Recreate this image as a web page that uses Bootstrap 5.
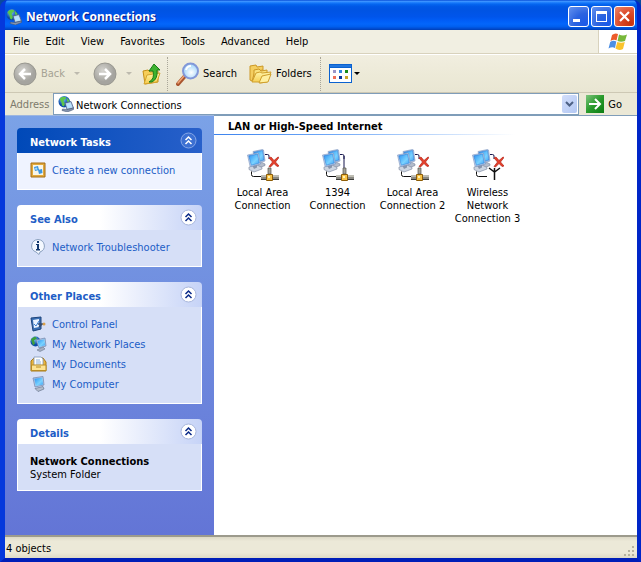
<!DOCTYPE html>
<html lang="en">
<head>
<meta charset="utf-8">
<meta name="viewport" content="width=device-width, initial-scale=1">
<title>Network Connections</title>
<link href="https://cdn.jsdelivr.net/npm/bootstrap@5.3.0/dist/css/bootstrap.min.css" rel="stylesheet">
<style>
:root { --link: #215dc6; }
body { font: 11px/13px "DejaVu Sans Condensed", Tahoma, "Noto Sans", sans-serif; color: #000; background: #0a4a9c; }
button { font: inherit; color: inherit; background: none; border: 0; padding: 0; }
svg { display: block; flex: none; }
.frame { border: solid; border-width: 0 4px 4px 5px; border-color: #0831d9 #0026c8 #001eb8 #0538dc; border-radius: 8px 8px 0 0; background: #0054e3; overflow: hidden; }
.caption-bar { height: 30px; margin: 0 -4px 0 -5px; padding: 3px 6px 0 6px; color: #fff;
  background: linear-gradient(#0a4fd8 0, #3a92ff 5%, #1a7cfb 9%, #0566f0 14%, #0058e6 22%, #0054e3 34%, #0055eb 56%, #005df6 68%, #0366fb 80%, #0060f0 88%, #0050d8 94%, #003eb4 100%); }
.caption-bar h1 { font: bold 12px/18px "Noto Sans", "Open Sans", sans-serif; margin: 0; text-shadow: 1px 1px #0a1883; }
.cap-btn { width: 21px; height: 21px; border: 1px solid #fff; border-radius: 3px; background: radial-gradient(circle at 85% 90%, #1b5ae8, #2b63e0 45%, #6f9bf2 110%); }
.cap-close { background: radial-gradient(circle at 80% 85%, #c8330c, #dd4c2b 50%, #f09a84 115%); }
.menu-row { height: 24px; background: #f1efe2; border-bottom: 1px solid #d8d2bd; }
.menu-row button { padding: 0 8px; }
.flag { width: 39px; background: #fff; border-left: 1px solid #d8d2bd; }
.tool-row { height: 39px; padding: 0 8px; background: linear-gradient(#f1eee0, #edead8 50%, #e9e6d3); border-top: 1px solid #fff; border-bottom: 1px solid #cdc8b4; }
.dim { color: #a5a294; }
.vline { height: 34px; border-left: 1px dotted #a9a699; }
.addr-row { height: 22px; background: #ebe8d6; }
.addr-row label { width: 48px; padding-left: 5px; color: #7d7a6c; }
.addr-box { border: 1px solid #7f9db9; background: #fff; }
.addr-box input { border: 0; outline: 0; padding: 2px 0 0 2px; font: inherit; color: #000; min-width: 0; background: none; }
.drop { width: 15px; margin: 1px; border-radius: 2px; background: linear-gradient(135deg, #d2defb, #b3c8f3); }
.go-btn { padding: 0 15px 0 7px; }
.side { width: 209px; padding: 12px; gap: 15px; background: linear-gradient(#7ba2e7, #6375d6); border-top: 1px solid #9db6e0; }
.pane-head { height: 25px; padding: 0 5px 0 13px; border-radius: 4px 4px 0 0; background: linear-gradient(90deg, #fff 45%, #c6d3f7); color: var(--link); }
.pane-head h2, .group-title { font: inherit; font-weight: bold; margin: 0; }
.pane-head h2 { padding-top: 3px; }
.pane-main .pane-head { background: linear-gradient(90deg, #0049b8, #2860ca); color: #fff; }
.pane-body { padding: 9px 12px 11px; background: #d6dff7; border: 1px solid #fff; border-top: 0; }
.pane-info { padding: 11px 12px 9px; }
.pane-main .pane-body { background: #eff3ff; }
.pane-body a { color: var(--link); text-decoration: none; gap: 5px; height: 16px; }
.files { background: #fff; border-top: 1px solid #7f9db9; }
.group-title { padding: 4px 0 1px 14px; }
.rule { height: 1px; max-width: 301px; background: linear-gradient(90deg, #3c83ee, #70a8f6 40%, #fff); }
.grid-items { padding: 14px 11px; }
.conn { width: 75px; }
.status { height: 23px; padding: 2px 1px 0; border-top: 2px solid #9c9a8c; background: linear-gradient(#dcd8c6, #ece9d8 20%, #ece9d8 75%, #dedac6); }
</style>
<script src="https://cdn.jsdelivr.net/npm/bootstrap@5.3.0/dist/js/bootstrap.bundle.min.js"></script>
</head>
<body>
<svg width="0" height="0" class="position-absolute" aria-hidden="true">
  <defs>
    <linearGradient id="scr" x1="0" y1="0" x2="1" y2="1"><stop offset="0" stop-color="#2f8cec"/><stop offset=".35" stop-color="#58b8fa"/><stop offset=".6" stop-color="#7ad2ff"/><stop offset="1" stop-color="#3d9ef2"/></linearGradient>
    <radialGradient id="globe" cx=".4" cy=".3"><stop offset="0" stop-color="#7cc4f8"/><stop offset="1" stop-color="#0d4aa8"/></radialGradient>
    <linearGradient id="fold" x1="0" y1="0" x2="0" y2="1"><stop offset="0" stop-color="#fff5a8"/><stop offset="1" stop-color="#f5cb4c"/></linearGradient>
    <radialGradient id="grey" cx=".4" cy=".35"><stop offset="0" stop-color="#d6d5d0"/><stop offset="1" stop-color="#a5a49f"/></radialGradient>
    <radialGradient id="lens" cx=".55" cy=".6"><stop offset="0" stop-color="#fff"/><stop offset="1" stop-color="#a9d8fb"/></radialGradient>
    <linearGradient id="go" x1="0" y1="0" x2="1" y2="1"><stop offset="0" stop-color="#7cc47c"/><stop offset=".5" stop-color="#299a2b"/><stop offset="1" stop-color="#0b7d12"/></linearGradient>
  </defs>
  <symbol id="i-net" viewBox="0 0 16 16">
    <circle cx="6.200" cy="5.700" r="5.700" fill="url(#globe)"/>
    <path d="M1.500 3q2-3 6-2l1 1.500-2 1-1 2 1.500 2-1 3-2-1-.5-3zM9 2l2.500 2.500-.5 2-2-1z" fill="#5cc64a"/>
    <path d="M7 7l6-1.500L15.500 12 9 13.500z" fill="#b9c9e0" stroke="#42608f" stroke-width=".8"/>
    <path d="M8.200 7.800l4.300-1.100 1.700 4.500-4.600 1.100z" fill="#b7e2fd"/>
    <path d="M4.500 13l4.500.500 6.500-1.500v1.500L9.500 16 4 14.500z" fill="#8494ae" stroke="#3c4e6c" stroke-width=".5"/>
  </symbol>
  <symbol id="i-up2" viewBox="0 0 17 17"><path d="M5.500 8l3-3 3 3M5.500 12l3-3 3 3" fill="none" stroke="currentColor" stroke-width="1.500"/></symbol>
  <symbol id="i-pcs" viewBox="0 0 32 32">
    <path d="M18 5.500h2.500q1.500 0 1.500 1.500v3" fill="none" stroke="#15154c"/>
    <path d="M9 15l6-1.500 3 1.500v1.500L12 19l-3-2z" fill="#b3bccb" stroke="#77839a" stroke-width=".6"/>
    <path d="M6 2.500L15.500.500l1 .500 1.500 11-9 2.500z" fill="#b7cbe8" stroke="#7590bd" stroke-width=".6"/>
    <path d="M7 3.200l8.500-1.700L17 11l-8 2z" fill="url(#scr)" stroke="#2477d2" stroke-width=".5"/>
    <path d="M2 18l8-2 5 2.500v1.500L7 23l-5-2.500z" fill="#cdd5e1" stroke="#77839a" stroke-width=".6"/>
    <path d="M5 16h5v2.500L7 20z" fill="#8794ab"/>
    <path d="M.5 6l10-2 1 .500 2 10.500-9.500 2.500-1-.5z" fill="#c3d4ed" stroke="#7590bd" stroke-width=".6"/>
    <path d="M1.800 6.800l8.700-1.700 1.800 9-8 2.100z" fill="url(#scr)" stroke="#2477d2" stroke-width=".5"/>
    <path d="M4.500 22.500v3q0 2 2 2H15" fill="none" stroke="#111"/>
  </symbol>
  <symbol id="i-plug" viewBox="0 0 32 32">
    <path d="M14 27h18v3H14z" fill="#8b8a83"/><path d="M14 26h18v2H14z" fill="#bdbcb2"/>
    <path d="M14 30h18v1H14z" fill="#3d3d3a"/>
    <path d="M21 19h3v6h-3z" fill="#a3a29a" stroke="#55534c" stroke-width=".7"/>
    <path d="M19.500 25.500h6v6h-6z" fill="#f9c447" stroke="#8d5d08"/><path d="M21 27h2v2h-2z" fill="#fff1b6"/>
  </symbol>
  <symbol id="i-x" viewBox="0 0 32 32"><path d="M22 9l2-1 3 3.500L31 8l1 .500-3.500 4.500L32 17l-2 .500-3-3-3.500 3.500-1.500-.5 3.500-4.500z" fill="#e5402a" stroke="#b3241a" stroke-width=".7"/></symbol>
</svg>

<div class="frame d-flex flex-column min-vh-100">
  <header class="caption-bar d-flex align-items-center">
    <svg width="16" height="16"><use href="#i-net"/></svg>
    <h1 class="flex-grow-1 ps-1">Network Connections</h1>
    <div class="d-flex" style="gap:2px">
      <button class="cap-btn" aria-label="Minimize"><svg width="19" height="19"><path d="M4 12h7v3H4z" fill="#fff"/></svg></button>
      <button class="cap-btn" aria-label="Maximize"><svg width="19" height="19"><path d="M4 4h11v11H4zM5 7v7h9V7z" fill="#fff" fill-rule="evenodd"/></svg></button>
      <button class="cap-btn cap-close" aria-label="Close"><svg width="19" height="19"><path d="M5 5l9 9M14 5l-9 9" stroke="#fff" stroke-width="2.200"/></svg></button>
    </div>
  </header>

  <nav class="menu-row d-flex" aria-label="Menu">
    <div class="d-flex flex-grow-1">
      <button>File</button><button>Edit</button><button>View</button><button>Favorites</button><button>Tools</button><button>Advanced</button><button>Help</button>
    </div>
    <div class="flag d-flex align-items-center justify-content-center">
      <svg width="20" height="20" viewBox="0 0 20 20"><path d="M4 3q3-2.500 6-1L8.500 8.500Q6 7 2.500 9z" fill="#ec5b2b"/><path d="M11 2.500q4 2 8 0L17 9q-4 1.500-7.500 0z" fill="#78b83a"/><path d="M2.200 10Q5 8 8.300 9.500L7 16q-3-1.500-6.500.500z" fill="#4d8fe3"/><path d="M9.300 10q4 1.500 7.500 0L15 17q-4 2-7.500-.500z" fill="#fac32c"/></svg>
    </div>
  </nav>

  <div class="tool-row d-flex align-items-center" role="toolbar" aria-label="Navigation">
    <button class="dim d-flex align-items-center" disabled>
      <svg class="me-1" width="24" height="24"><circle cx="12" cy="12" r="11" fill="url(#grey)" stroke="#999890"/><path d="M18 12H8M12 7l-5 5 5 5" fill="none" stroke="#fff" stroke-width="2.500"/></svg>Back
      <svg class="ms-2" width="8" height="5"><path d="M1 1h6L4 4z" fill="#bdbaae"/></svg>
    </button>
    <button class="d-flex align-items-center ms-2 ps-1" disabled aria-label="Forward">
      <svg width="24" height="24"><circle cx="12" cy="12" r="11" fill="url(#grey)" stroke="#999890"/><path d="M6 12h10M12 7l5 5-5 5" fill="none" stroke="#fff" stroke-width="2.500"/></svg>
      <svg class="ms-2" width="8" height="5"><path d="M1 1h6L4 4z" fill="#bdbaae"/></svg>
    </button>
    <button class="ms-2 me-1" aria-label="Up">
      <svg width="22" height="24"><path d="M2 9l5-1 2 2 8-1v11L4 22z" fill="#f6ce58" stroke="#c58f16"/><path d="M3 22l3-9 13-2-3 9z" fill="url(#fold)" stroke="#d5a42c"/><path d="M8 20q6-3 4-11H8l5-7 6 6h-3q1 9-5 12z" fill="#3db22f" stroke="#1a7c18"/></svg>
    </button>
    <div class="vline me-2"></div>
    <button class="d-flex align-items-center">
      <svg class="me-1" width="23" height="24"><path d="M2 22l7-8" stroke="#a9542d" stroke-width="4" stroke-linecap="round"/><path d="M2 21l6-7" stroke="#f0a678" stroke-width="1.500" stroke-linecap="round"/><circle cx="14.500" cy="9" r="7.500" fill="url(#lens)" stroke="#8398d8" stroke-width="2"/><path d="M10 8q1-4 5-4" fill="none" stroke="#fff" stroke-width="2"/></svg>Search
    </button>
    <button class="d-flex align-items-center ms-2 ps-1">
      <svg class="me-1" width="23" height="22"><path d="M1 3l6-1 1 2 6-1v4l-8 1-3 10-2-1z" fill="#f4ce60" stroke="#cc9826"/><path d="M5 7l5-1 2 2 6-1v4l-7 2-5 6-1-2z" fill="#fae27e" stroke="#cc9826"/><path d="M3 19l4-9 4-1 2 1 9-1-4 10-7 1-1-1z" fill="url(#fold)" stroke="#cf9f2c"/><path d="M10 20l3-7 9-2-3 8z" fill="#fff0a0" stroke="#cf9f2c"/></svg>Folders
    </button>
    <div class="vline ms-2 me-2"></div>
    <button class="d-flex align-items-center" aria-label="Views">
      <svg width="23" height="19"><path d="M0 0h23v19H0z" fill="#0a62d0"/><path d="M1 4h21v14H1z" fill="#fff"/><path d="M1 1h21v2H1z" fill="#2276de"/><path d="M4 6h3v3H4z" fill="#9a96c8"/><path d="M10 6h3v3h-3z" fill="#3388e0"/><path d="M16 6h3v3h-3z" fill="#188c18"/><path d="M4 12h3v3H4z" fill="#ef7058"/><path d="M10 12h3v3h-3z" fill="#0b379c"/><path d="M16 12h3v3h-3z" fill="#cca426"/></svg>
      <svg width="9" height="5"><path d="M2 1h6L5 4z"/></svg>
    </button>
  </div>

  <div class="addr-row d-flex align-items-stretch">
    <label for="addr" class="align-self-center">Address</label>
    <div class="addr-box d-flex flex-grow-1">
      <svg class="ms-1 align-self-center" width="16" height="16"><use href="#i-net"/></svg>
      <input id="addr" class="flex-grow-1" type="text" value="Network Connections">
      <button class="drop" aria-label="Show addresses"><svg class="mx-auto" width="9" height="7"><path d="M1 1l3.500 3.500L8 1" fill="none" stroke="#4d6185" stroke-width="2"/></svg></button>
    </div>
    <button class="go-btn d-flex align-items-center gap-1">
      <svg width="18" height="18"><path d="M0 0h18v18H0z" fill="url(#go)"/><path d="M3 9h10M9 4l5 5-5 5" fill="none" stroke="#fff" stroke-width="2"/></svg>Go
    </button>
  </div>

  <div class="d-flex flex-grow-1">
    <aside class="side d-flex flex-column flex-shrink-0">
      <section class="pane-main">
        <div class="pane-head d-flex align-items-center justify-content-between"><h2>Network Tasks</h2>
          <button aria-label="Collapse Network Tasks"><svg width="17" height="17"><circle cx="8.500" cy="8.500" r="7.500" fill="#3c70d2" stroke="#86a6e6"/><use href="#i-up2"/></svg></button></div>
        <div class="pane-body"><a href="#" class="d-flex align-items-center">
          <svg width="17" height="16"><path d="M1 1h14v14H1z" fill="#e1a93c" stroke="#a66c12"/><path d="M3 3h10v10H3z" fill="#f7f5e8"/><path d="M4 5l4-1 1 4-4 1zM8 8l4-1 .500 4-3.500 1z" fill="#3b95e0"/><path d="M5 6l2-.5.5 2-2 .5z" fill="#a8dcff"/></svg>Create a new connection</a></div>
      </section>
      <section>
        <div class="pane-head d-flex align-items-center justify-content-between"><h2>See Also</h2>
          <button aria-label="Collapse See Also"><svg width="17" height="17" color="#0a2a88"><circle cx="8.500" cy="8.500" r="7.500" fill="#fff" stroke="#a8b6dc"/><use href="#i-up2"/></svg></button></div>
        <div class="pane-body"><a href="#" class="d-flex align-items-center">
          <svg width="17" height="16"><path d="M8 .5a7 6.500 0 0 1 2 12.500l-1 2.500-3-2.500A7 6.500 0 0 1 8 .5z" fill="#f4f8ff" stroke="#8ba0be"/><path d="M7 2h2v2H7zM6 5h3v5h1v1.500H6V10h1V6H6z" fill="#14396f"/></svg>Network Troubleshooter</a></div>
      </section>
      <section>
        <div class="pane-head d-flex align-items-center justify-content-between"><h2>Other Places</h2>
          <button aria-label="Collapse Other Places"><svg width="17" height="17" color="#0a2a88"><circle cx="8.500" cy="8.500" r="7.500" fill="#fff" stroke="#a8b6dc"/><use href="#i-up2"/></svg></button></div>
        <div class="pane-body d-flex flex-column gap-1">
          <a href="#" class="d-flex align-items-center"><svg width="17" height="16"><path d="M1 2l10-1v12L3 15z" fill="#3a6fb4" stroke="#1d447c"/><path d="M3 4l6-1v8l-5 1z" fill="#eaf3ff"/><path d="M4 8l2 2 3-5" fill="none" stroke="#3a7fd2"/><path d="M8 8h6M9 11l3-3" stroke="#354b70" stroke-width="1.500"/><circle cx="14" cy="8" r="1.500" fill="#d8a04a"/></svg>Control Panel</a>
          <a href="#" class="d-flex align-items-center"><svg width="17" height="16"><circle cx="5.500" cy="5.500" r="5" fill="url(#globe)"/><path d="M1 3l4-2.500 2 2-3 2 1 3-2 2z" fill="#3da03a"/><path d="M6 4l9-2 1 8-7 2z" fill="#b7c9e4" stroke="#6c82ab" stroke-width=".7"/><path d="M7.300 4.800l7-1.500 1 6-6 1.700z" fill="url(#scr)"/><path d="M7 14l6-3 2 2-5 2.500z" fill="#a6b0c3" stroke="#68778f" stroke-width=".6"/></svg>My Network Places</a>
          <a href="#" class="d-flex align-items-center"><svg width="17" height="16"><path d="M1 5l3-3h9l3 4v9H1z" fill="#e9b53e" stroke="#a97a16"/><path d="M4 1h7l2 2v7H4z" fill="#fff" stroke="#7f95b8" stroke-width=".8"/><path d="M6 4h4M6 6h5M6 8h5" stroke="#8cb0dd"/><path d="M1.500 9H16v5.500H1.500z" fill="#fde394" stroke="#b88c25"/><path d="M6 11h5" stroke="#b88c25"/></svg>My Documents</a>
          <a href="#" class="d-flex align-items-center"><svg width="17" height="16"><path d="M3 2l10-1.500 1 8.500-9 2z" fill="#b7c9e4" stroke="#6d83aa" stroke-width=".7"/><path d="M4.300 2.800l8-1.200.8 6.800-7.300 1.600z" fill="url(#scr)"/><path d="M5 12.500l8-2 1 2.500-6 2.500z" fill="#b4bdcc" stroke="#68778f" stroke-width=".7"/></svg>My Computer</a>
        </div>
      </section>
      <section>
        <div class="pane-head d-flex align-items-center justify-content-between"><h2>Details</h2>
          <button aria-label="Collapse Details"><svg width="17" height="17" color="#0a2a88"><circle cx="8.500" cy="8.500" r="7.500" fill="#fff" stroke="#a8b6dc"/><use href="#i-up2"/></svg></button></div>
        <div class="pane-body pane-info"><strong class="d-block">Network Connections</strong>System Folder</div>
      </section>
    </aside>

    <main class="files flex-grow-1">
      <h2 class="group-title">LAN or High-Speed Internet</h2>
      <div class="rule"></div>
      <div class="grid-items d-flex flex-wrap text-center">
        <div class="conn"><svg class="mx-auto mb-1" width="32" height="33"><use href="#i-pcs" height="32"/><use href="#i-plug" height="32"/><use href="#i-x" height="32"/></svg>Local Area Connection</div>
        <div class="conn"><svg class="mx-auto mb-1" width="32" height="33"><use href="#i-pcs" height="32"/><path d="M22 7v13" stroke="#15154c"/><use href="#i-plug" height="32"/></svg>1394 Connection</div>
        <div class="conn"><svg class="mx-auto mb-1" width="32" height="33"><use href="#i-pcs" height="32"/><use href="#i-plug" height="32"/><use href="#i-x" height="32"/></svg>Local Area Connection 2</div>
        <div class="conn"><svg class="mx-auto mb-1" width="32" height="33"><use href="#i-pcs" height="32"/><path d="M22.500 19v12M17 19l5.500 4 5.500-4" fill="none" stroke="#111" stroke-width="1.500"/><use href="#i-x" height="32"/></svg>Wireless Network Connection 3</div>
      </div>
    </main>
  </div>

  <footer class="status d-flex justify-content-between align-items-center">4 objects
    <svg class="align-self-end" width="13" height="13"><path d="M9 1h2v2H9zM5 5h2v2H5zM9 5h2v2H9zM1 9h2v2H1zM5 9h2v2H5zM9 9h2v2H9z" fill="#b5b29f"/></svg>
  </footer>
</div>
</body>
</html>
